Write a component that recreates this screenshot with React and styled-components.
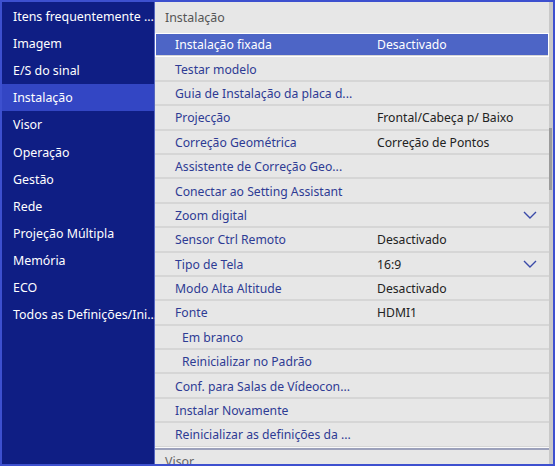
import styled, { createGlobalStyle } from "styled-components";

const Global = createGlobalStyle`
  html, body { margin: 0; padding: 0; background: #3c4fcc; }
  body { font-family: "Noto Sans", "Open Sans", sans-serif; overflow: hidden; }
`

const Frame = styled.div`
  width: 555px;
  height: 466px;
  box-sizing: border-box;
  border: 2px solid #3d50cf;
  display: flex;
  overflow: hidden;
  background: #0f1e84;
`

const SideMenu = styled.div`
  width: 152px;
  flex: none;
  background: #0f1e84;
  border-right: 1px solid #5566c0;
  display: flex;
  flex-direction: column;
  padding-top: 1px;
`

const SideItem = styled.div`
  height: 27.1px;
  display: flex;
  align-items: center;
  padding-left: 11px;
  font-size: 12.4px;
  color: #fff;
  white-space: nowrap;
  background: ${p => (p.active ? "#3346c4" : "transparent")};
`

const Panel = styled.div`
  flex: 1;
  display: flex;
  background: #e7e7e7;
  min-width: 0;
`

const PanelBody = styled.div`
  flex: 1;
  display: flex;
  flex-direction: column;
  min-width: 0;
`

const Header = styled.div`
  height: 31px;
  flex: none;
  display: flex;
  align-items: center;
  padding-left: 10px;
  font-size: 12.4px;
  color: #555;
  box-sizing: border-box;
`

const Row = styled.div`
  height: 24.4px;
  flex: none;
  box-sizing: border-box;
  display: flex;
  align-items: center;
  font-size: 12.2px;
  padding-top: 1px;
  border-bottom: 2px solid #d6d6d6;
  background: ${p => (p.active ? "#4d65c6" : "transparent")};
  outline: ${p => (p.active ? "1px solid #fff" : "none")};
  outline-offset: -1px;
`

const Label = styled.span`
  width: 222px;
  flex: none;
  padding-left: ${p => (p.sub ? 27 : 20)}px;
  box-sizing: border-box;
  color: ${p => (p.active ? "#fff" : "#2e3b94")};
  white-space: nowrap;
`

const Value = styled.span`
  flex: 1;
  color: ${p => (p.active ? "#fff" : "#222")};
  white-space: nowrap;
`

const Chevron = styled.svg`
  width: 14px;
  height: 8px;
  margin-right: 12px;
  flex: none;
`

const Divider = styled.div`
  height: 3px;
  flex: none;
  border-top: 1px solid #fafafa;
  background: #9ca1bb;
  box-sizing: border-box;
  margin-top: -1px;
`

const NextHeader = styled.div`
  padding-left: 10px;
  padding-top: 3px;
  font-size: 12.4px;
  color: #666;
`

const Scroll = styled.div`
  width: 4px;
  flex: none;
  background: #c9c9c9;
  padding-top: 126px;
  box-sizing: border-box;
`

const Thumb = styled.div`
  width: 3px;
  height: 62px;
  background: #9b9b9b;
`

const side = [
  "Itens frequentemente ...",
  "Imagem",
  "E/S do sinal",
  "Instalação",
  "Visor",
  "Operação",
  "Gestão",
  "Rede",
  "Projeção Múltipla",
  "Memória",
  "ECO",
  "Todos as Definições/Ini...",
]

const rows = [
  { label: "Instalação fixada", value: "Desactivado", active: true },
  { label: "Testar modelo" },
  { label: "Guia de Instalação da placa d..." },
  { label: "Projecção", value: "Frontal/Cabeça p/ Baixo" },
  { label: "Correção Geométrica", value: "Correção de Pontos" },
  { label: "Assistente de Correção Geo..." },
  { label: "Conectar ao Setting Assistant" },
  { label: "Zoom digital", chevron: true },
  { label: "Sensor Ctrl Remoto", value: "Desactivado" },
  { label: "Tipo de Tela", value: "16:9", chevron: true },
  { label: "Modo Alta Altitude", value: "Desactivado" },
  { label: "Fonte", value: "HDMI1" },
  { label: "Em branco", sub: true },
  { label: "Reinicializar no Padrão", sub: true },
  { label: "Conf. para Salas de Vídeocon..." },
  { label: "Instalar Novamente" },
  { label: "Reinicializar as definições da ..." },
]

const App = () => {
  return <Frame>
    <Global />
    <SideMenu>
      {side.map(s => <SideItem key={s} active={s === "Instalação"}>{s}</SideItem>)}
    </SideMenu>
    <Panel>
      <PanelBody>
        <Header>Instalação</Header>
        {rows.map(r => (
          <Row key={r.label} active={r.active}>
            <Label sub={r.sub} active={r.active}>{r.label}</Label>
            <Value active={r.active}>{r.value}</Value>
            {r.chevron && (
              <Chevron viewBox="0 0 14 8">
                <path d="M1 1 L7 7 L13 1" fill="none" stroke="#3a4aa8" strokeWidth="1.4" />
              </Chevron>
            )}
          </Row>
        ))}
        <Divider />
        <NextHeader>Visor</NextHeader>
      </PanelBody>
      <Scroll>
        <Thumb />
      </Scroll>
    </Panel>
  </Frame>
}

export default App
